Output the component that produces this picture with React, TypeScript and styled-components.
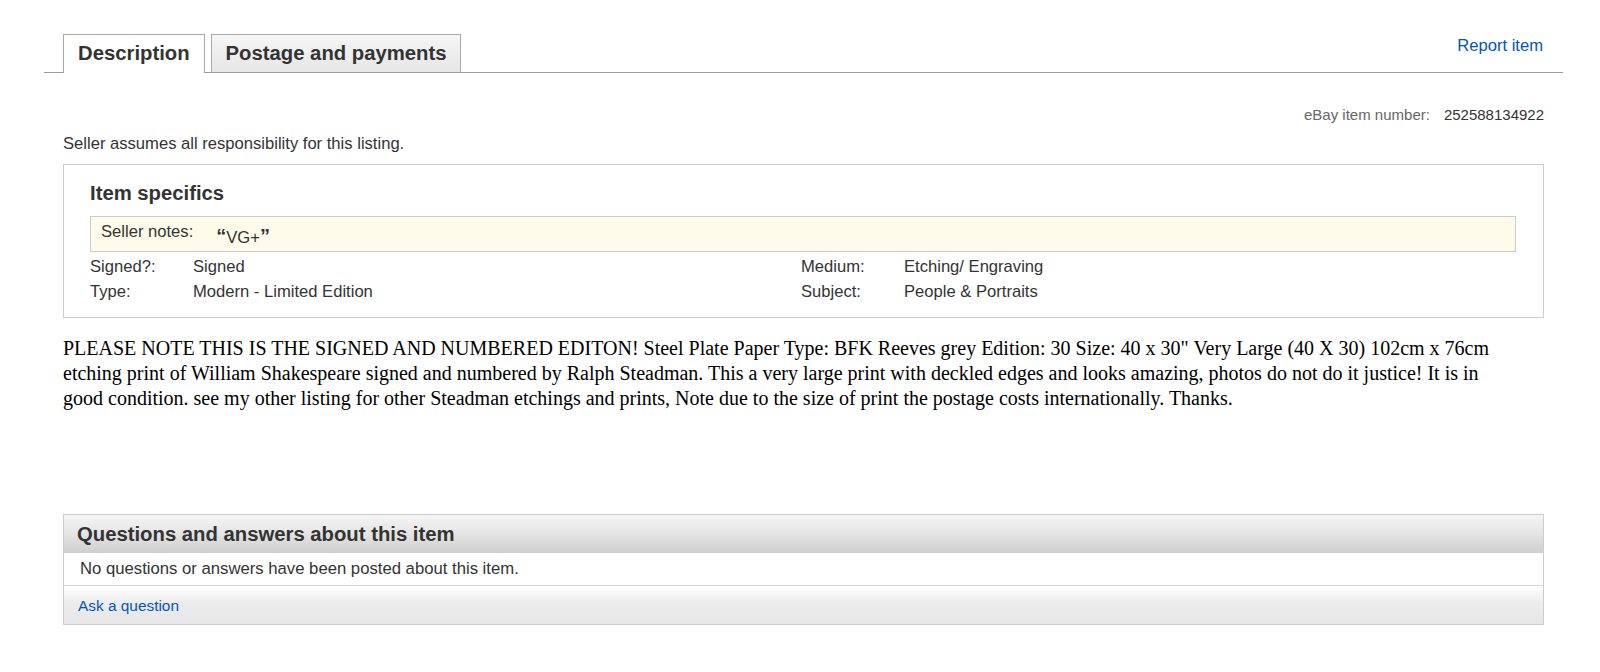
import React from "react";
import styled, { createGlobalStyle } from "styled-components";

const GlobalStyle = createGlobalStyle`
  html, body {
    margin: 0;
    padding: 0;
    background: #ffffff;
  }
  body {
    font-family: "Liberation Sans", Arial, Helvetica, sans-serif;
    color: #333333;
    font-size: 16.6px;
  }
`;

const Page = styled.div`
  width: 1519px;
  padding: 34px 0 40px 44px;
`;

const TabBar = styled.div`
  display: flex;
  align-items: flex-end;
  height: 38px;
  padding: 0 20px 0 19px;
  border-bottom: 1px solid #9a9a9a;
`;

const Tab = styled.div<{ $active?: boolean }>`
  box-sizing: border-box;
  height: ${(p) => (p.$active ? "39px" : "38px")};
  margin-bottom: ${(p) => (p.$active ? "-1px" : "0")};
  margin-right: 6px;
  padding: 0 14px;
  border: 1px solid #a8a8a8;
  border-bottom: none;
  font-size: 20.3px;
  font-weight: bold;
  line-height: 37px;
  color: #333333;
  white-space: nowrap;
  background: ${(p) =>
    p.$active ? "#ffffff" : "linear-gradient(#f6f6f6, #e6e6e6)"};
  cursor: pointer;
`;

const ReportLink = styled.a`
  margin-left: auto;
  align-self: flex-start;
  margin-top: 2px;
  font-size: 16.6px;
  line-height: 20px;
  color: #0654ba;
  text-decoration: none;
`;

const Content = styled.div`
  padding: 0 19px;
`;

const ItemNumberRow = styled.div`
  margin-top: 33px;
  display: flex;
  justify-content: flex-end;
  font-size: 15px;
  line-height: 18px;
`;

const NumLabel = styled.span`
  color: #666666;
  margin-right: 14px;
`;

const NumValue = styled.span`
  color: #333333;
`;

const Disclaimer = styled.div`
  margin-top: 9.5px;
  line-height: 20px;
  color: #333333;
`;

const SpecsBox = styled.div`
  margin-top: 10.5px;
  border: 1px solid #cccccc;
  padding: 16px 27px 13px 26px;
`;

const SpecsTitle = styled.h2`
  margin: 0;
  font-size: 20.3px;
  font-weight: bold;
  line-height: 24px;
  color: #333333;
`;

const NotesBox = styled.div`
  box-sizing: border-box;
  height: 36px;
  margin-top: 11px;
  padding: 5px 10px 0;
  display: flex;
  align-items: flex-start;
  border: 1px solid #cccccc;
  background: #fefbea;
`;

const NotesLabel = styled.span`
  line-height: 20px;
`;

const NotesValue = styled.span`
  margin-left: 23px;
  margin-top: 4px;
  line-height: 20px;
`;

const Quote = styled.span`
  font-size: 20px;
  font-weight: bold;
`;

const SpecsGrid = styled.div`
  margin-top: 2px;
  display: grid;
  grid-template-columns: 711px 1fr;
`;

const SpecRow = styled.div`
  display: grid;
  grid-template-columns: 103px 1fr;
  line-height: 25px;
`;

const SpecsColumn = styled.div`
  display: flex;
  flex-direction: column;
`;

const Description = styled.div`
  margin-top: 18px;
  padding-right: 29px;
  font-family: "Liberation Serif", "Times New Roman", serif;
  font-size: 20px;
  line-height: 25px;
  color: #000000;
`;

const QABox = styled.div`
  margin-top: 103px;
  border: 1px solid #cccccc;
`;

const QAHeader = styled.h3`
  margin: 0;
  padding: 0 13px;
  font-size: 20.3px;
  font-weight: bold;
  line-height: 38px;
  color: #333333;
  background: linear-gradient(#f5f5f5 0%, #e6e6e6 45%, #cfcfcf 100%);
`;

const QABody = styled.div`
  padding: 0 16px;
  line-height: 32px;
  font-size: 16.7px;
  background: #ffffff;
  border-bottom: 1px solid #d4d4d4;
`;

const QAFooter = styled.div`
  padding: 1px 14px 0;
  font-size: 15.4px;
  line-height: 37px;
  background: linear-gradient(#ffffff 0%, #ececec 45%, #e6e6e6 100%);
`;

const Link = styled.a`
  color: #0654ba;
  text-decoration: none;
`;

const leftSpecs = [
  ["Signed?:", "Signed"],
  ["Type:", "Modern - Limited Edition"],
];
const rightSpecs = [
  ["Medium:", "Etching/ Engraving"],
  ["Subject:", "People & Portraits"],
];

export default function App() {
  return (
    <>
      <GlobalStyle />
      <Page>
        <TabBar>
          <Tab $active>Description</Tab>
          <Tab>Postage and payments</Tab>
          <ReportLink href="#">Report item</ReportLink>
        </TabBar>
        <Content>
          <ItemNumberRow>
            <NumLabel>eBay item number:</NumLabel>
            <NumValue>252588134922</NumValue>
          </ItemNumberRow>
          <Disclaimer>Seller assumes all responsibility for this listing.</Disclaimer>
          <SpecsBox>
            <SpecsTitle>Item specifics</SpecsTitle>
            <NotesBox>
              <NotesLabel>Seller notes:</NotesLabel>
              <NotesValue>
                <Quote>“</Quote>VG+<Quote>”</Quote>
              </NotesValue>
            </NotesBox>
            <SpecsGrid>
              <SpecsColumn>
                {leftSpecs.map(([k, v]) => (
                  <SpecRow key={k}>
                    <span>{k}</span>
                    <span>{v}</span>
                  </SpecRow>
                ))}
              </SpecsColumn>
              <SpecsColumn>
                {rightSpecs.map(([k, v]) => (
                  <SpecRow key={k}>
                    <span>{k}</span>
                    <span>{v}</span>
                  </SpecRow>
                ))}
              </SpecsColumn>
            </SpecsGrid>
          </SpecsBox>
          <Description>
            PLEASE NOTE THIS IS THE SIGNED AND NUMBERED EDITON! Steel Plate Paper Type: BFK
            Reeves grey Edition: 30 Size: 40 x 30" Very Large (40 X 30) 102cm x 76cm etching
            print of William Shakespeare signed and numbered by Ralph Steadman. This a very large
            print with deckled edges and looks amazing, photos do not do it justice! It is in good
            condition. see my other listing for other Steadman etchings and prints, Note due to the
            size of print the postage costs internationally. Thanks.
          </Description>
          <QABox>
            <QAHeader>Questions and answers about this item</QAHeader>
            <QABody>No questions or answers have been posted about this item.</QABody>
            <QAFooter>
              <Link href="#">Ask a question</Link>
            </QAFooter>
          </QABox>
        </Content>
      </Page>
    </>
  );
}
